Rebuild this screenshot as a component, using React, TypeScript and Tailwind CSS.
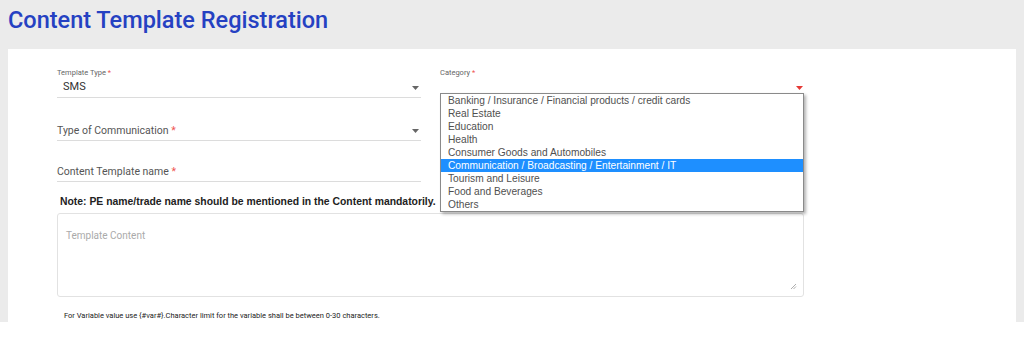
const categories = [
  "Banking / Insurance / Financial products / credit cards",
  "Real Estate",
  "Education",
  "Health",
  "Consumer Goods and Automobiles",
  "Communication / Broadcasting / Entertainment / IT",
  "Tourism and Leisure",
  "Food and Beverages",
  "Others",
];

function Caret({ red }: { red?: boolean }) {
  return (
    <svg width="7" height="4" viewBox="0 0 7 4" className="shrink-0">
      <path d="M0 0h7L3.5 4z" fill={red ? "#e53935" : "#666"} />
    </svg>
  );
}

function Req() {
  return <span className="text-[#ef5350]"> *</span>;
}

export default function App() {
  return (
    <div className="bg-white min-h-[361px] font-['Roboto','Liberation_Sans',sans-serif]">
      <div className="h-[322px] overflow-hidden bg-[#ebebeb] px-2">
        <div className="h-[49px] pt-[6px]">
          <h1 className="text-[23.5px] leading-[28px] font-medium text-[#2541c2]">
            Content Template Registration
          </h1>
        </div>

        <div className="bg-white h-[273px] pl-[49px] pt-[19px]">
          <div className="grid grid-cols-[364px_364px] gap-x-[19px]">
            {/* left column */}
            <div>
              <div className="border-b border-[#dcdcdc]">
                <div className="h-[10px] text-[7.5px] leading-[10px] text-[#666]">
                  Template Type<Req />
                </div>
                <div className="h-[19px] flex items-center justify-between pl-[6px] pr-[2px]">
                  <span className="text-[11px] text-[#333]">SMS</span>
                  <Caret />
                </div>
              </div>
              <div className="h-[43px] flex items-end border-b border-[#dcdcdc]">
                <div className="h-[19px] w-full flex items-center justify-between pr-[2px]">
                  <span className="text-[10.5px] text-[#555]">
                    Type of Communication<Req />
                  </span>
                  <Caret />
                </div>
              </div>
              <div className="h-[41px] flex items-end border-b border-[#dcdcdc]">
                <div className="h-[19px] w-full flex items-center">
                  <span className="text-[10.5px] text-[#555]">
                    Content Template name<Req />
                  </span>
                </div>
              </div>
            </div>

            {/* right column */}
            <div className="relative">
              <div className="h-[10px] text-[7.5px] leading-[10px] text-[#666]">
                Category<Req />
              </div>
              <div className="h-[19px] flex items-center justify-end pr-[1px]">
                <Caret red />
              </div>
              <ul className="absolute left-0 top-[25px] z-10 w-[364px] bg-white border border-[#8a8a8a] shadow-[2px_2px_3px_rgba(0,0,0,0.3)] font-['Liberation_Sans',sans-serif]">
                {categories.map((c, i) => (
                  <li
                    key={c}
                    className={
                      "h-[13px] pl-[7px] text-[10.2px] leading-[13px] " +
                      (i === 5 ? "bg-[#1e8fff] text-white" : "text-[#505050]")
                    }
                  >
                    {c}
                  </li>
                ))}
              </ul>
            </div>
          </div>

          <div className="h-[31px] pt-[14px] pl-[3px] text-[10.4px] leading-[12px] font-bold text-[#222] font-['Liberation_Sans',sans-serif]">
            Note: PE name/trade name should be mentioned in the Content mandatorily.
          </div>
          <div className="relative w-[747px] h-[84px] border border-[#e2e2e2] rounded-[3px] px-[8px] pt-[8px]">
            <span className="text-[10px] text-[#aaa]">Template Content</span>
            <svg width="7" height="7" viewBox="0 0 7 7" className="absolute right-[6px] bottom-[6px]">
              <path d="M6 1L1 6M6 3.5L3.5 6" stroke="#999" strokeWidth="0.8" />
            </svg>
          </div>
          <div className="pt-[14px] pl-[7px] text-[7.5px] leading-[10px] text-[#222]">
            For Variable value use {"{#var#}"}.Character limit for the variable shall be between 0-30 characters.
          </div>
        </div>
      </div>
    </div>
  );
}
